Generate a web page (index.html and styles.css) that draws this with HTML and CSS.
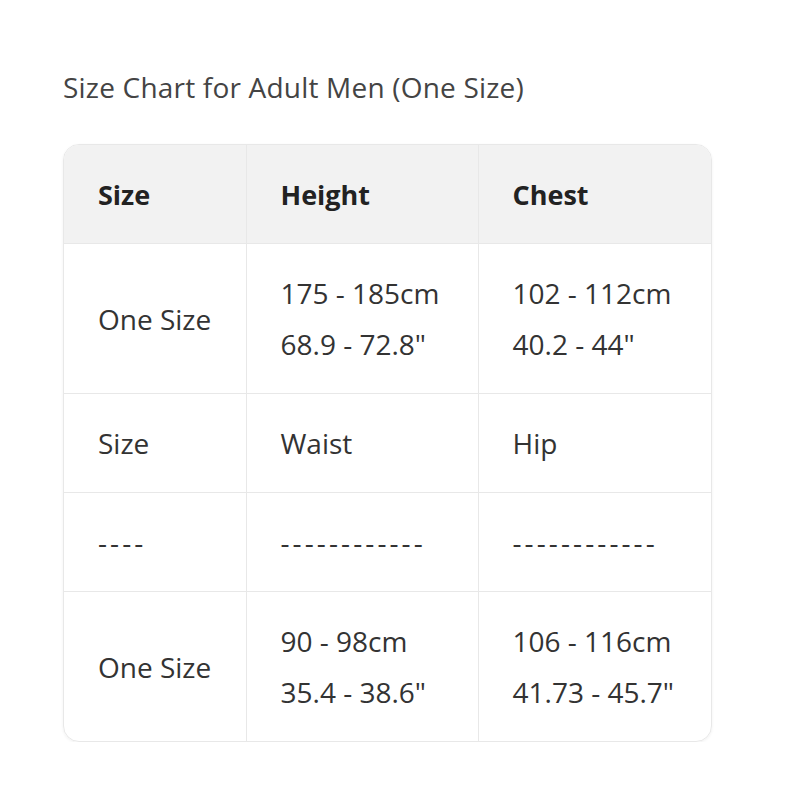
FILE: index.html
```html
<!DOCTYPE html>
<html>
<head>
<meta charset="utf-8">
<link rel="stylesheet" href="styles.css">
</head>
<body>
<div class="page">
  <p class="title">Size Chart for Adult Men (One Size)</p>
  <div class="table-wrap">
    <table class="chart">
      <thead>
        <tr><th>Size</th><th>Height</th><th>Chest</th></tr>
      </thead>
      <tbody>
        <tr><td>One Size</td><td>175 - 185cm<br>68.9 - 72.8"</td><td>102 - 112cm<br>40.2 - 44"</td></tr>
        <tr><td>Size</td><td>Waist</td><td>Hip</td></tr>
        <tr class="dashes"><td>----</td><td>------------</td><td>------------</td></tr>
        <tr><td>One Size</td><td>90 - 98cm<br>35.4 - 38.6"</td><td>106 - 116cm<br>41.73 - 45.7"</td></tr>
      </tbody>
    </table>
  </div>
</div>
</body>
</html>
```
FILE: styles.css
```css
html, body { margin: 0; padding: 0; background: #fff; }
.page {
  padding: 67px 0 0 63px;
  font-family: "Open Sans", "Noto Sans", sans-serif;
  color: #333;
}
.title {
  margin: 0 0 37px 0;
  font-size: 28px;
  line-height: 40px;
  color: #444;
  letter-spacing: 0.2px;
}
.table-wrap {
  box-sizing: border-box;
  width: 649px;
  border: 1px solid #e8e8e8;
  border-radius: 16px;
  overflow: hidden;
  box-shadow: 0 1px 3px rgba(0,0,0,0.06);
}
.chart {
  width: 100%;
  border-collapse: collapse;
  font-size: 28px;
  table-layout: fixed;
}
.chart th, .chart td {
  text-align: left;
  padding: 24px 16px 23px 34px;
  line-height: 51px;
  border-right: 1px solid #e8e8e8;
  border-bottom: 1px solid #e8e8e8;
  vertical-align: middle;
  white-space: nowrap;
}
.chart th:last-child, .chart td:last-child { border-right: none; }
.chart tr:last-child td { border-bottom: none; }
.chart th:nth-child(1) { width: 182px; box-sizing: border-box; }
.chart th:nth-child(2) { width: 232px; box-sizing: border-box; }
.chart th {
  background: #f2f2f2;
  font-weight: 700;
  font-size: 27px;
  color: #222;
}
.chart td { color: #333; }
.chart .dashes td { letter-spacing: 3.1px; line-height: 47px; padding-top: 26px; padding-bottom: 25px; }
```
